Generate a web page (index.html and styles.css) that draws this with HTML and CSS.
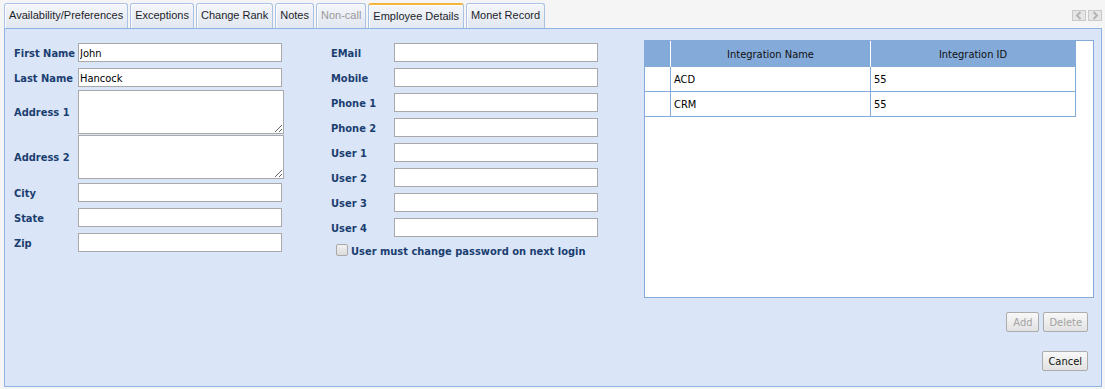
FILE: index.html
```html
<!DOCTYPE html>
<html>
<head>
<meta charset="utf-8">
<link rel="stylesheet" href="styles.css">
</head>
<body>
<div class="tabbar">
  <div class="tabs">
    <div class="tab">Availability/Preferences</div>
    <div class="tab">Exceptions</div>
    <div class="tab">Change Rank</div>
    <div class="tab">Notes</div>
    <div class="tab disabled">Non-call</div>
    <div class="tab active">Employee Details</div>
    <div class="tab">Monet Record</div>
  </div>
  <div class="scrollers">
    <span class="scr"><svg width="12" height="9" viewBox="0 0 12 9"><path d="M7.5 1 L4 4.5 L7.5 8" fill="none" stroke="#b4b4b4" stroke-width="2"/></svg></span>
    <span class="scr"><svg width="12" height="9" viewBox="0 0 12 9"><path d="M4.5 1 L8 4.5 L4.5 8" fill="none" stroke="#b4b4b4" stroke-width="2"/></svg></span>
  </div>
</div>
<div class="panel">
  <div class="col col-left">
    <div class="row"><label class="lbl">First Name</label><input class="field" type="text" value="John"></div>
    <div class="row row-tight"><label class="lbl">Last Name</label><input class="field" type="text" value="Hancock"></div>
    <div class="row row-ta row-ta1"><label class="lbl">Address 1</label><textarea class="area"></textarea></div>
    <div class="row row-ta row-ta2"><label class="lbl">Address 2</label><textarea class="area"></textarea></div>
    <div class="row"><label class="lbl">City</label><input class="field" type="text"></div>
    <div class="row"><label class="lbl">State</label><input class="field" type="text"></div>
    <div class="row"><label class="lbl">Zip</label><input class="field" type="text"></div>
  </div>
  <div class="col col-mid">
    <div class="row"><label class="lbl">EMail</label><input class="field" type="text"></div>
    <div class="row"><label class="lbl">Mobile</label><input class="field" type="text"></div>
    <div class="row"><label class="lbl">Phone 1</label><input class="field" type="text"></div>
    <div class="row"><label class="lbl">Phone 2</label><input class="field" type="text"></div>
    <div class="row"><label class="lbl">User 1</label><input class="field" type="text"></div>
    <div class="row"><label class="lbl">User 2</label><input class="field" type="text"></div>
    <div class="row"><label class="lbl">User 3</label><input class="field" type="text"></div>
    <div class="row"><label class="lbl">User 4</label><input class="field" type="text"></div>
    <div class="check-row"><span class="checkbox"></span><span class="check-lbl">User must change password on next login</span></div>
  </div>
  <div class="col col-right">
    <div class="gridbox">
      <div class="grow ghead">
        <div class="hcell"></div>
        <div class="hcell">Integration Name</div>
        <div class="hcell last">Integration ID</div>
      </div>
      <div class="grow">
        <div class="cell"></div>
        <div class="cell">ACD</div>
        <div class="cell">55</div>
      </div>
      <div class="grow">
        <div class="cell"></div>
        <div class="cell">CRM</div>
        <div class="cell">55</div>
      </div>
    </div>
    <div class="btn-row">
      <button class="btn btn-add" disabled>Add</button>
      <button class="btn" disabled>Delete</button>
    </div>
    <div class="btn-row btn-row-cancel">
      <button class="btn">Cancel</button>
    </div>
  </div>
</div>
</body>
</html>
```

FILE: styles.css
```css
html, body {
  margin: 0;
  padding: 0;
}
body {
  background: #f5f5f5;
  font-family: "DejaVu Sans Condensed", "DejaVu Sans", sans-serif;
  font-size: 11px;
  width: 1105px;
  height: 389px;
  overflow: hidden;
}

/* Tab bar */
.tabbar {
  display: flex;
  justify-content: space-between;
  height: 28px;
  padding: 0 3px 0 4px;
}
.tabs {
  display: flex;
  align-items: flex-end;
  gap: 2px;
}
.tab {
  box-sizing: border-box;
  height: 25px;
  padding: 0 4px;
  border: 1px solid #a9c2e6;
  border-bottom: none;
  border-radius: 3px 3px 0 0;
  background: linear-gradient(#f4f6fa, #e1e7f1);
  box-shadow: inset 1px 1px 0 #ffffff;
  font-family: "Liberation Sans", Arial, sans-serif;
  font-size: 11px;
  line-height: 23px;
  color: #1e1e2a;
  white-space: nowrap;
}
.tab.disabled {
  color: #9a9a9a;
}
.tab.active {
  border-top: 2px solid #f3b53d;
  line-height: 22px;
  background: linear-gradient(#f3f5f9, #e3e9f3);
}
.scrollers {
  display: flex;
  gap: 2px;
  padding-top: 10px;
}
.scr {
  box-sizing: border-box;
  width: 14px;
  height: 11px;
  border: 1px solid #c9c9c9;
  background: #e6e6e6;
  display: flex;
  align-items: center;
  justify-content: center;
}

/* Panel */
.panel {
  box-sizing: border-box;
  height: 359px;
  margin: 0 3px 0 4px;
  border: 1px solid #8eb2e2;
  background: #dae6f8;
  padding: 11px 8px 0 9px;
  display: flex;
  align-items: flex-start;
}
.col-left {
  width: 270px;
  margin-top: 3px;
}
.col-mid {
  width: 267px;
  margin-left: 47px;
  margin-top: 3px;
}
.col-right {
  width: 450px;
  margin-left: 46px;
}

.row {
  display: flex;
  align-items: center;
  height: 19px;
  margin-bottom: 6px;
}
.row-tight {
  margin-bottom: 3px;
}
.row-ta {
  height: 44px;
}
.row-ta1 {
  margin-bottom: 1px;
}
.row-ta2 {
  margin-bottom: 4px;
}
.lbl {
  flex: none;
  width: 64px;
  padding-top: 1px;
  font-weight: bold;
  font-size: 11px;
  color: #1a3e70;
  white-space: nowrap;
}
.col-mid .lbl {
  width: 63px;
}
.field {
  box-sizing: border-box;
  width: 204px;
  height: 19px;
  margin: 0;
  padding: 1px 1px 0;
  border: 1px solid #a9a9a9;
  background: #fff;
  font-family: "DejaVu Sans Condensed", "DejaVu Sans", sans-serif;
  font-size: 11px;
  color: #000;
  outline: none;
}
.area {
  box-sizing: border-box;
  width: 206px;
  height: 44px;
  margin: 0;
  padding: 1px;
  border: 1px solid #a9a9a9;
  background: #fff;
  font-family: "DejaVu Sans Condensed", "DejaVu Sans", sans-serif;
  font-size: 11px;
}

.check-row {
  display: flex;
  align-items: center;
  height: 14px;
  margin-top: 4px;
  padding-left: 5px;
  gap: 3px;
}
.checkbox {
  box-sizing: border-box;
  width: 12px;
  height: 12px;
  border: 1px solid #a8a8a8;
  border-radius: 2px;
  background: linear-gradient(#f2f2f2, #dadada);
}
.check-lbl {
  padding-top: 2px;
  font-weight: bold;
  font-size: 11px;
  color: #1a3e70;
  white-space: nowrap;
}

/* Grid */
.gridbox {
  box-sizing: border-box;
  width: 450px;
  height: 258px;
  border: 1px solid #84aad9;
  background: #fff;
}
.grow {
  display: grid;
  grid-template-columns: 26px 200px 205px;
  width: 431px;
}
.hcell {
  box-sizing: border-box;
  height: 26px;
  padding-top: 2px;
  background: #84aad9;
  border-right: 1px solid #ffffff;
  text-align: center;
  line-height: 24px;
  color: #111;
  font-size: 11px;
}
.hcell.last {
  border-right-color: #84aad9;
}
.cell {
  box-sizing: border-box;
  height: 25px;
  border-right: 1px solid #84aad9;
  border-bottom: 1px solid #84aad9;
  padding: 2px 0 0 3px;
  line-height: 22px;
  color: #000;
  font-size: 11px;
}

.btn-row {
  display: flex;
  justify-content: flex-end;
  gap: 4px;
  margin-top: 14px;
  padding-right: 6px;
}
.btn-row-cancel {
  margin-top: 19px;
}
.btn {
  box-sizing: border-box;
  height: 20px;
  padding: 0 5px;
  margin: 0;
  border: 1px solid #acacac;
  border-radius: 2px;
  background: linear-gradient(#f8f8f8, #e2e2e2);
  font-family: "DejaVu Sans Condensed", "DejaVu Sans", sans-serif;
  font-size: 11px;
  color: #111;
}
.btn-add {
  padding: 0 6px;
}
.btn:disabled {
  color: #a2a2a2;
}
```
